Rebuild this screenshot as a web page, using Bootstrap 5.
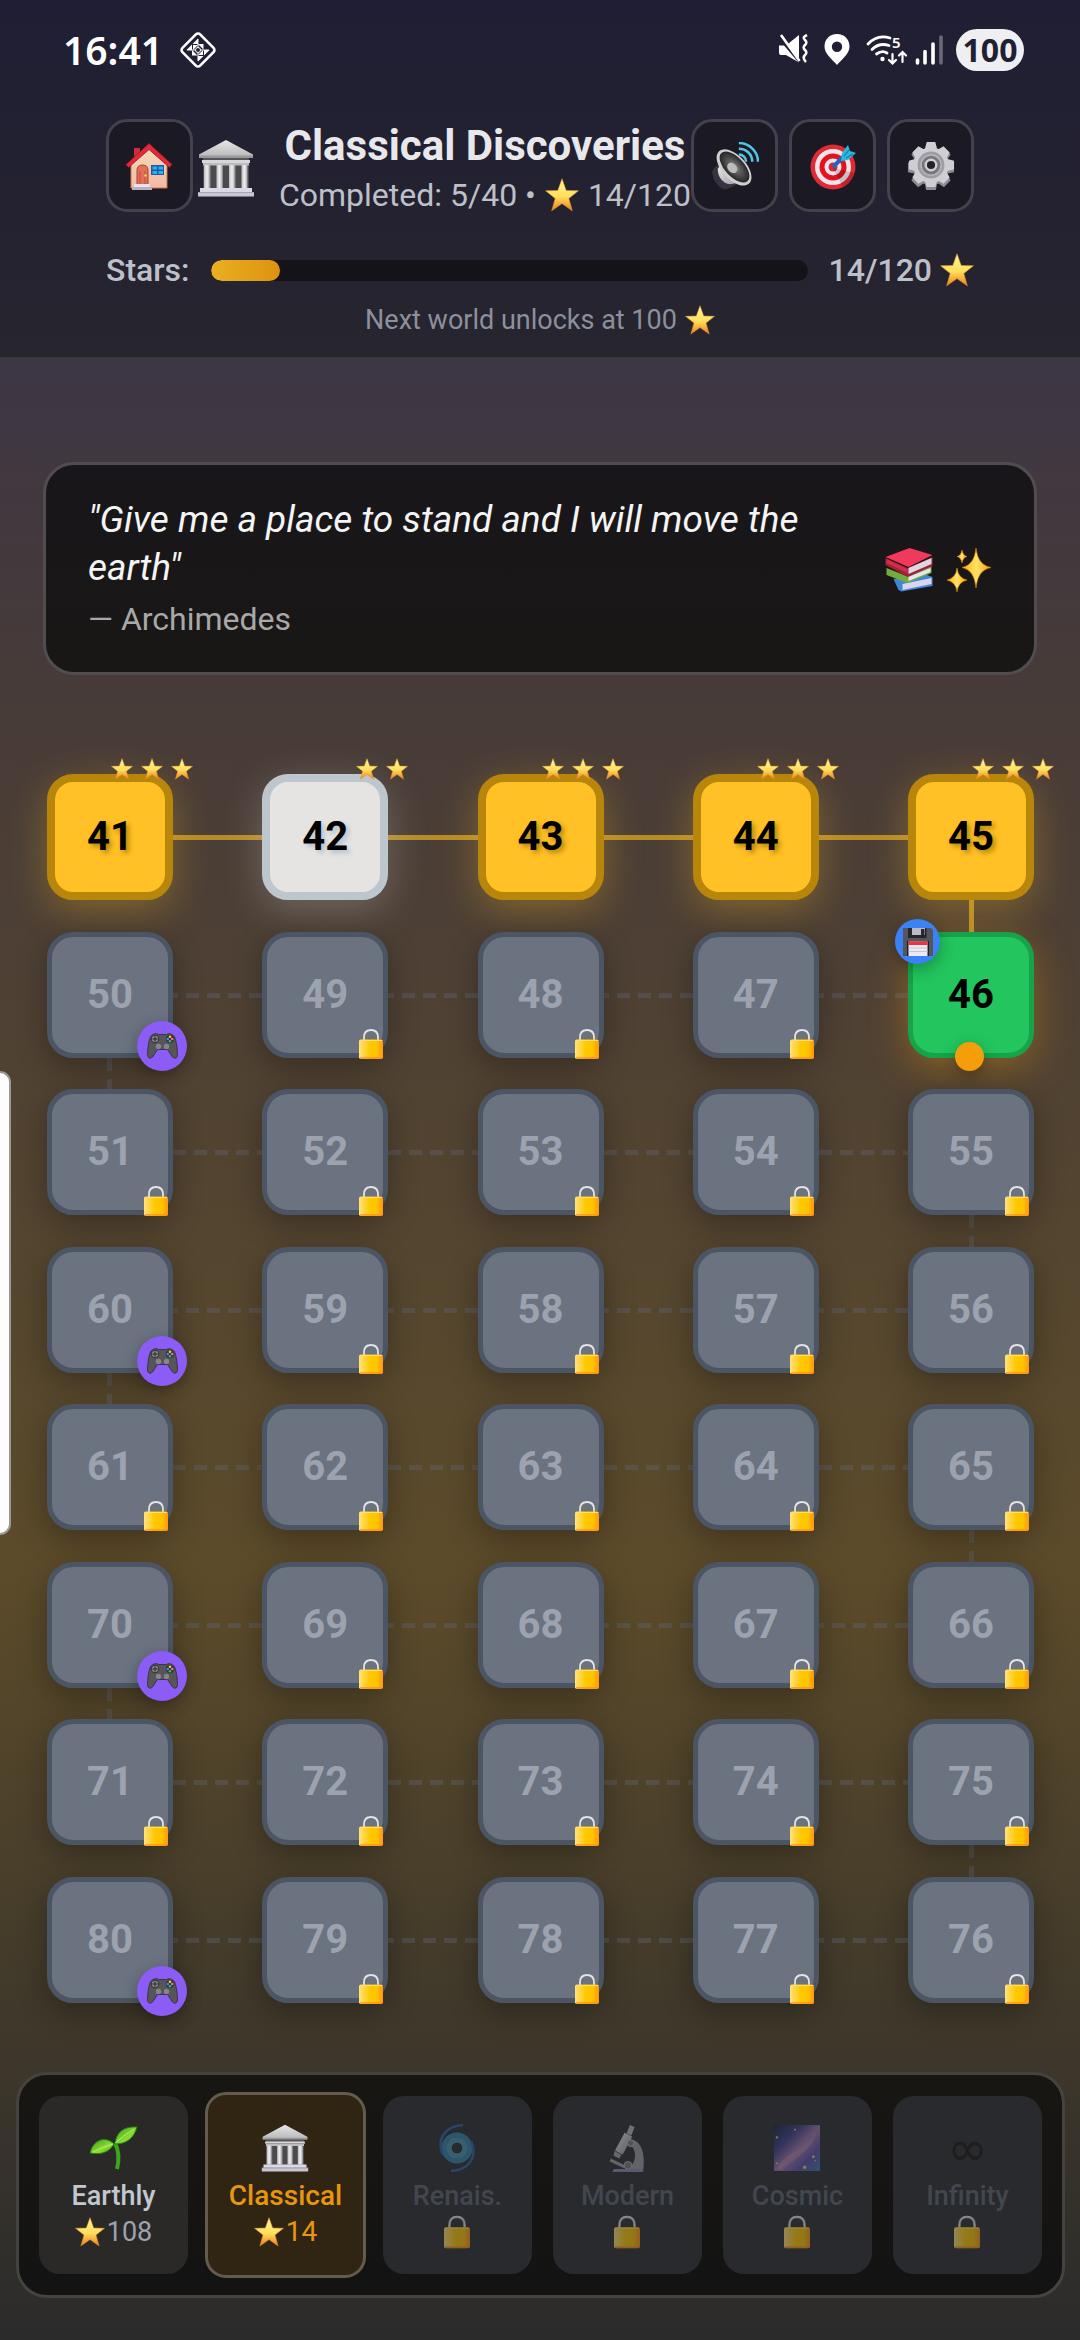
<!DOCTYPE html>
<html lang="en">
<head>
<meta charset="utf-8">
<meta name="viewport" content="width=device-width, initial-scale=1">
<title>Classical Discoveries</title>
<link rel="stylesheet" href="https://cdn.jsdelivr.net/npm/bootstrap@5.3.0/dist/css/bootstrap.min.css">
<style>
  body {
    font-family: Roboto, "Liberation Sans", sans-serif;
    background: linear-gradient(180deg, #39344a 0, #3d3644 360px, #473b39 680px, #5c4b2a 1570px, #2b2b2b 2340px) #2b2b2b;
    min-height: 100vh;
    color: #e8e8ea;
    overflow-x: hidden;
  }
  svg { display: block; flex: none; }
  .w-22 { width: 22px; height: 22px; }
  .w-30 { width: 30px; height: 30px; }
  .w-34 { width: 34px; height: 34px; }
  .w-48 { width: 48px; height: 48px; }
  .w-58 { width: 58px; height: 58px; }

  .top-area { background: linear-gradient(180deg, #1f1e34, #27252e); border-bottom: 3px solid #3b3841; padding-bottom: 19px; }
  .status-bar { font-family: "Noto Sans", sans-serif; font-weight: 600; color: #fff; height: 99px; padding: 0 56px 0 63px; }
  .status-bar svg { overflow: visible; }
  .clock { font-size: 39px; line-height: 40px; font-weight: 600; }
  .battery { background: #efeff2; color: #211f33; font-size: 32px; line-height: 42px; font-weight: 700; width: 68px; border-radius: 21px; text-align: center; margin-left: 12px; }

  .inner { padding: 0 106px; }
  .title-row { margin-top: 20px; }
  .tools { gap: 11px; }
  .tool { width: 87px; height: 93px; padding: 0; border: 3px solid #43424c; border-radius: 21px; background: #1b1923; display: flex; align-items: center; justify-content: center; }
  .world-name { font-size: 42px; line-height: 54px; font-weight: 700; margin: 0; white-space: nowrap; }
  .world-sub { font-size: 32px; line-height: 44px; color: #bdc0c8; white-space: nowrap; gap: 9px; }
  .star-row { font-size: 32px; line-height: 42px; font-weight: 500; color: #bdc0c8; margin-top: 32px; }
  .star-bar { height: 21px; border-radius: 11px; background: #141319; margin: 0 21px; }
  .star-bar .progress-bar { border-radius: 11px; background: linear-gradient(90deg, #e9b022, #de920f); }
  .unlock { font-size: 27px; line-height: 36px; color: #8c909b; margin-top: 11px; }

  .quote-box { margin: 102px 43px 0; padding: 31px 42px 29px; border: 3px solid #514d4f; border-radius: 31px; background: linear-gradient(#18161a, #191715); }
  .quote-box blockquote { font-size: 37px; line-height: 48px; font-style: italic; color: #f4f4f4; margin: 0 0 3px; }
  .quote-box figcaption { font-size: 32px; line-height: 48px; color: #a9a8a8; }
  .quote-art { gap: 12px; }

  .level-map { padding: 99px 46px 0 47px; }
  .tile { position: relative; width: 126px; height: 126px; flex: none; padding: 0; border-radius: 26px; font-size: 40px; font-weight: 700; line-height: 48px; color: #000; display: flex; align-items: center; justify-content: center; }
  .tile-gold { background: #ffc125; border: 8px solid #b8860b; box-shadow: 0 10px 39px rgba(255,193,37,.3); text-shadow: 3px 3px 5px #b8860b; }
  .tile-silver { background: #e5e4e2; border: 8px solid #bec6cd; box-shadow: 0 10px 39px rgba(229,228,226,.25); text-shadow: 3px 3px 5px #b6c0cb; }
  .tile-open { background: #22c55e; border: 5px solid #16a34a; box-shadow: 0 10px 39px rgba(245,158,11,.35); }
  .tile-shut, .tile-shut:disabled { background: #6b7280; border: 5px solid #4b5563; color: #9ca3af; box-shadow: 0 10px 31px rgba(0,0,0,.3); }
  .link-x { height: 5px; flex: 1 1 0; }
  .link-y { width: 5px; margin: 0 60px; }
  .turn-in { height: 32px; }
  .turn-after { height: 31px; }
  .done { background: #b58c29; }
  .dash-r { background: repeating-linear-gradient(90deg, #62677859 0 13px, transparent 13px 21px); }
  .dash-l { background: repeating-linear-gradient(270deg, #62677859 0 13px, transparent 13px 21px); }
  .dash-d { background: repeating-linear-gradient(180deg, #62677859 0 13px, transparent 13px 21px); }

  /* markers lying over a tile */
  .mark-stars { position: absolute; top: -24px; right: -28px; display: flex; gap: 8px; }
  .mark-lock { position: absolute; right: 0; bottom: -6px; width: 24px; height: 30px; }
  .mark-badge { position: absolute; border-radius: 50%; display: flex; align-items: center; justify-content: center; box-shadow: 0 5px 16px rgba(0,0,0,.3); }
  .mark-game { right: -19px; bottom: -18px; width: 50px; height: 50px; background: #8b5cf6; }
  .mark-save { left: -18px; top: -18px; width: 45px; height: 45px; background: #3b82f6; }
  .mark-dot { left: 42px; bottom: -18px; width: 29px; height: 29px; background: #f59e0b; }

  .world-nav { gap: 21px; margin: 69px 15px 42px 16px; padding: 21px 20px; border: 3px solid #454340; border-radius: 31px; background: linear-gradient(#181613, #131313); }
  .world { flex: 1 1 0; height: 178px; padding: 4px 0 0; border: 0; border-radius: 21px; background: #2a2928; color: #c3c8d0; font-size: 27px; line-height: 36px; display: flex; flex-direction: column; align-items: center; justify-content: center; }
  .world b { font-weight: 500; margin-top: 6px; }
  .world-score { color: #9ca3af; gap: 2px; }
  .world-now { flex-grow: 1.04; height: 186px; margin: -4px; border: 3px solid #655b4d; background: #302413; color: #e8960f; font-size: 28px; }
  .world-now .world-score { color: #e8960f; }
  .world-off, .world-off:disabled { background: #292a2d; color: #42474f; }
  .world-off svg { opacity: .5; }
  .inf { font-size: 48px; line-height: 48px; color: #1d1d1e; font-family: "DejaVu Sans", sans-serif; }
  .edge-panel { position: absolute; left: -3px; top: 1071px; width: 14px; height: 464px; background: #fdfdfd; border: 2px solid #9b9892; border-radius: 0 11px 11px 0; }
</style>
<script src="https://cdn.jsdelivr.net/npm/bootstrap@5.3.0/dist/js/bootstrap.bundle.min.js"></script>
</head>
<body class="position-relative">

<svg width="0" height="0" class="position-absolute" aria-hidden="true">
  <defs>
    <linearGradient id="gStar" x1="0" y1="0" x2="0" y2="1"><stop offset="0" stop-color="#fff6a0"/><stop offset=".55" stop-color="#ffdf5c"/><stop offset="1" stop-color="#f07d1c"/></linearGradient>
    <linearGradient id="gLock"><stop offset="0" stop-color="#ffe27e"/><stop offset=".45" stop-color="#ffc800"/><stop offset=".75" stop-color="#ffc400"/><stop offset="1" stop-color="#ff9410"/></linearGradient>
    <linearGradient id="gStone" x1="0" y1="0" x2="0" y2="1"><stop offset="0" stop-color="#e6e6e6"/><stop offset="1" stop-color="#b9b9bb"/></linearGradient>
    <linearGradient id="gCol"><stop offset="0" stop-color="#bdbcc2"/><stop offset=".5" stop-color="#efedf2"/><stop offset="1" stop-color="#aaa9ae"/></linearGradient>
    <linearGradient id="gWall" x1="0" y1="0" x2="0" y2="1"><stop offset="0" stop-color="#f3dcb8"/><stop offset="1" stop-color="#f3b9a6"/></linearGradient>
    <linearGradient id="gLeaf" x1="0" y1="0" x2="1" y2="1"><stop offset="0" stop-color="#2a9b16"/><stop offset=".6" stop-color="#8fdc33"/><stop offset="1" stop-color="#2f9a17"/></linearGradient>
    <linearGradient id="gSky" x1="0" y1="0" x2="1" y2="1"><stop offset="0" stop-color="#11243a"/><stop offset=".3" stop-color="#3c3d8c"/><stop offset=".52" stop-color="#a276ac"/><stop offset=".75" stop-color="#5a4fae"/><stop offset="1" stop-color="#3a79a8"/></linearGradient>
    <linearGradient id="gSteel" x1="0" y1="0" x2="1" y2="1"><stop offset="0" stop-color="#f4f4f4"/><stop offset="1" stop-color="#8f8e98"/></linearGradient>
    <linearGradient id="gTwinkle" x1="0" y1="0" x2="1" y2="0"><stop offset="0" stop-color="#ffb000"/><stop offset=".5" stop-color="#ffe368"/><stop offset="1" stop-color="#ff9d00"/></linearGradient>
    <radialGradient id="gCone"><stop offset="0" stop-color="#b5b5b5"/><stop offset=".35" stop-color="#626262"/><stop offset="1" stop-color="#252525"/></radialGradient>

    <symbol id="star" viewBox="0 0 34 34"><path d="M17 .8 21.2 12.5 33.4 12.8 23.8 20.4 27.3 32.8 17 25.6 6.7 32.8 10.2 20.4.6 12.8 12.8 12.5Z" fill="url(#gStar)" stroke="#e99527" stroke-width=".6"/></symbol>
    <symbol id="lock" viewBox="0 0 24 30"><path d="M5 12V8.500C5 3.500 8 1.200 12 1.200s7 2.300 7 7.300V12" fill="none" stroke="#6b6f78" stroke-width="2.600"/><path d="M5 11V8.500C5 3.500 8 1 12 1s7 2.500 7 7.500V11" fill="none" stroke="#e4e4e6" stroke-width="1.800"/><rect y="10.500" width="24" height="19.500" rx="1.800" fill="url(#gLock)"/><path d="M1 11.500h22" stroke="#ffdf6b"/><path d="M1 29h22" stroke="#ff8d20" stroke-width="1.400"/></symbol>
    <symbol id="temple" viewBox="0 0 58 58"><path d="M29 1 56 15.500V18H2v-2.500Z" fill="url(#gStone)"/><path d="M2 16.500h54V19H2z" fill="#99999b"/><path d="M6 19h46v3H6z" fill="#55555a"/><path d="M5 21h48v3H5z" fill="#d8d8dc"/><path d="M6 24h46v26H6z" fill="#4b4b4b"/><path d="M6 24h46v2.500H6z" fill="#bcbcc0"/><g fill="url(#gCol)"><rect x="7" y="26" width="6" height="23"/><rect x="19.500" y="26" width="6" height="23"/><rect x="32" y="26" width="6" height="23"/><rect x="44.500" y="26" width="6" height="23"/></g><path d="M13 27v22M25.500 27v22M38 27v22" stroke="#8d8d91"/><path d="M3 49h52v4H3z" fill="#dcd8e6"/><path d="M1 53h56v4.500H1z" fill="#cbc6d6"/><path d="M1 53.500h56" stroke="#aaa5b6"/></symbol>
    <symbol id="house" viewBox="0 0 48 48"><path d="M9 6h6v10H9z" fill="#c9303c"/><path d="M6 21 24 5l18 17v24H6Z" fill="url(#gWall)" stroke="#c07a4d"/><path d="M24 1.500 47 22.500l-2.500 3L24 7.500 3.500 25.500 1 22.500Z" fill="#e2293a" stroke="#8f1522" stroke-width=".8"/><path d="M12 44V28c0-3 2-5 5.500-5s5.500 2 5.500 5v16z" fill="#e0705a" stroke="#a8442f"/><path d="M15 43V29M20 43V29" stroke="#b9503c"/><circle cx="20.500" cy="33.500" r="1.300" fill="#ffd23c"/><path d="M26 23h13v10H26z" fill="#2457a6"/><path d="M27.500 24.500h4.500v3h-4.500zm6 0H38v3h-4.500zm-6 4.500h4.500v3h-4.500zm6 0H38v3h-4.500z" fill="#1fb7ee"/><path d="M9 42h16v3H9z" fill="#e8e4ea"/><path d="M7 45h20v3H7z" fill="#b7b1bd"/></symbol>
    <symbol id="speaker" viewBox="0 0 50 50"><path d="M1 31q3-7 9-8l19 19q-3 4-14 7.500Q3 46 1 31Z" fill="#38313f"/><path d="m7 28 6-10 24 23-17 3C12 43 7 36 7 28Z" fill="url(#gSteel)"/><ellipse cx="24" cy="26.500" rx="12.500" ry="23" transform="rotate(-43 24 26.500)" fill="#cfcfcf"/><ellipse cx="24.500" cy="26" rx="10" ry="20" transform="rotate(-43 24.500 26)" fill="url(#gCone)"/><ellipse cx="22" cy="27" rx="4.500" ry="6" transform="rotate(-43 22 27)" fill="#bcbcbc"/><g fill="none" stroke="#52c4e0" stroke-width="2.600"><path d="M29 13c4 0 7.500 3 7.500 7.500"/><path d="M29 7c8 0 14 6 14 13.500"/><path d="M29 1c11 0 20 9 20 19.500"/></g></symbol>
    <symbol id="target" viewBox="0 0 48 48"><circle cx="24" cy="25" r="22.500" fill="#e02a35"/><circle cx="24" cy="25" r="18" fill="#f0e4ea"/><circle cx="24" cy="25" r="13.500" fill="#e0131f"/><circle cx="24" cy="25" r="8.500" fill="#f0e4ea"/><circle cx="24" cy="25" r="4.500" fill="#d92633"/><path d="M24 26 46 31A22 22 0 0 1 34 45Z" fill="#000" opacity=".16"/><path d="m24 25 14-14" stroke="#1f63c4" stroke-width="4"/><path d="m33 11 6-8 2 6 6 2-8 7-7 1Z" fill="#2bb8dc"/><path d="m35 14 5-6M37 16l7-4" stroke="#0d86b5" stroke-width="1.200"/></symbol>
    <symbol id="gear" viewBox="0 0 48 50"><g fill="#8c8b96" transform="translate(0 2.500)"><circle cx="24" cy="24" r="18.500"/><path d="M19 0h10l1.500 8h-13zM19 48h10l1.500-8h-13z"/><path d="M19 0h10l1.500 8h-13zM19 48h10l1.500-8h-13z" transform="rotate(45 24 24)"/><path d="M19 0h10l1.500 8h-13zM19 48h10l1.500-8h-13z" transform="rotate(90 24 24)"/><path d="M19 0h10l1.500 8h-13zM19 48h10l1.500-8h-13z" transform="rotate(135 24 24)"/></g><g fill="#cfcfd3"><circle cx="24" cy="24" r="18.500"/><path d="M19.500 0h9l2 8h-13zM19.500 47h9l2-7h-13z"/><path d="M19.500 1h9l2 7h-13zM19.500 47h9l2-7h-13z" transform="rotate(45 24 24)"/><path d="M19.500 0h9l2 8h-13zM19.500 47h9l2-7h-13z" transform="rotate(90 24 24)"/><path d="M19.500 1h9l2 7h-13zM19.500 47h9l2-7h-13z" transform="rotate(135 24 24)"/></g><circle cx="24" cy="24" r="14" fill="#9d9da3"/><circle cx="24" cy="24" r="10.500" fill="#77777e" stroke="#b7b7bd" stroke-width="1.500"/><circle cx="24" cy="24" r="5.500" fill="#24232d" stroke="#cfcfd3" stroke-width="2.500"/></symbol>
    <symbol id="books" viewBox="0 0 49 44"><path d="m9 31 28-6 11 4v9L17 43.500 14 42Z" fill="#3f86d6"/><path d="m18 36 29-6v6L18 42Z" fill="#d9d5ec"/><path d="m2 20 20 8 25-10v7L23 35 2 27Z" fill="#6fae3a"/><path d="m24 29 22-9v4L24 33Z" fill="#e9e4f2"/><path d="m1 10 22 10L48 9v9L23 29 1 17Z" fill="#a51d3d"/><path d="m24 20 23-10v6L24 26Z" fill="#ddd7df"/><path d="M1 9 25 0l23 7-24 12Z" fill="#f1395c"/><path d="M2 11v4l21 10v-4Z" fill="#d22d4b"/></symbol>
    <symbol id="sparkles" viewBox="0 0 46 46"><g fill="url(#gTwinkle)" stroke="#f08a00" stroke-width=".5"><path d="M30 1q1.500 17 15 19.500Q31.500 23 30 41q-1.500-18-14-20.500Q28.500 18 30 1Z"/><path d="M11 21q1 10 10 12-9 2-10 12-1-10-10-12 9-2 10-12Z"/><path d="M16 3q.8 5.500 5 6.500-4.200 1-5 6.500-.8-5.500-5-6.500 4.200-1 5-6.500Z"/></g></symbol>
    <symbol id="pad" viewBox="0 0 31 26"><path d="M3.500 3.500C6 .5 10 0 11.500 1.500h8C21 0 25 .5 27.500 3.500c2 5 3 13 3 18 0 4-3 4.500-5 2.500l-5-7.500h-10l-5 7.500c-2 2-5 1.500-5-2.500 0-5 1-13 3-18Z" fill="#55555a" stroke="#2d2c31" stroke-width=".8"/><circle cx="8" cy="6" r="3.800" fill="#8c8c90" stroke="#303034"/><path d="M8 3.500v5M5.500 6h5" stroke="#3b3b40" stroke-width="1.400"/><circle cx="23" cy="6" r="4.200" fill="#333338"/><circle cx="23" cy="3.800" r="1.300" fill="#ffd21c"/><circle cx="25.200" cy="6" r="1.300" fill="#ff6d84"/><circle cx="20.800" cy="6" r="1.300" fill="#2c9cf0"/><circle cx="23" cy="8.200" r="1.300" fill="#1fc47c"/><circle cx="11.500" cy="13.500" r="2.700" fill="#85858a"/><circle cx="19.500" cy="13.500" r="2.700" fill="#85858a"/></symbol>
    <symbol id="disk" viewBox="0 0 30 28"><path d="M0 0h28l2 2v26H0Z" fill="#53565e"/><path d="M5 0h18.500v10H5Z" fill="#24262b"/><path d="M9 0h13v7H9Z" fill="#b9bbbf"/><path d="M18 1h3.500v6H18Z" fill="#2a2a2e"/><path d="M4 13h22v15H4Z" fill="#1e1f24"/><path d="M5.500 13.500h19V28h-19Z" fill="#eceaf0"/><path d="M5.500 13.500h19v3.500h-19Z" fill="#ee3340"/><path d="M5.500 20h19M5.500 23.500h19" stroke="#c6c4d2"/></symbol>
    <symbol id="sprout" viewBox="0 0 48 48"><path d="M25 19c4 8 4 18 2 26" fill="none" stroke="#3aa51d" stroke-width="4"/><path d="M25 20C26 8 34 2 47 3c-3 11-10 17-22 17Z" fill="url(#gLeaf)" stroke="#1d7f10"/><path d="M24 20C15 11 3 16 0 29c10 2 19 0 24-9Z" fill="url(#gLeaf)" stroke="#1d7f10"/><path d="M25 19Q33 12 44 5M23 20Q12 23 3 28" fill="none" stroke="#c9f27e" stroke-width=".8"/></symbol>
    <symbol id="swirl" viewBox="0 0 48 48"><circle cx="24" cy="24" r="10.500" fill="none" stroke="#3280ae" stroke-width="10"/><circle cx="24" cy="24" r="8" fill="none" stroke="#4a93b0" stroke-width="5"/><path d="M10 31C3 15 12 2 30 1" fill="none" stroke="#2a63a8" stroke-width="2.500"/><path d="M38 17C45 33 36 46 18 47" fill="none" stroke="#2a63a8" stroke-width="2.500"/></symbol>
    <symbol id="scope" viewBox="0 0 48 50"><path d="m27 1 5 2-3.500 9-5-2z" fill="#b4b4ba"/><path d="m21.500 9 8 4-10 19-8-4.500z" fill="url(#gSteel)"/><path d="m11 28 7 4-2 4-6-3z" fill="#a4a4aa"/><path d="M27 16c12 1 16 14 14 31H26c8-9 8-17 3-24Z" fill="#9c9ca3"/><circle cx="28" cy="20" r="3.500" fill="#7c7c84" stroke="#c5c5cb"/><path d="m7 36 15 7-1 3L6 39z" fill="#a0a0a6"/><circle cx="25" cy="43" r="4" fill="#77777f" stroke="#bbb"/><path d="M10 47h31v3H9z" fill="#8c8ab0"/></symbol>
    <symbol id="galaxy" viewBox="0 0 48 50"><path d="M0 1h48v48H0z" fill="url(#gSky)"/><path d="M3 46C12 30 28 30 44 10 38 30 20 36 8 49Z" fill="#c692b0" opacity=".5"/><g fill="#f2d34a"><circle cx="3" cy="14" r="1.200"/><circle cx="22" cy="6" r="1"/><circle cx="41" cy="34" r="1.400"/><circle cx="32" cy="45" r="1.800"/><circle cx="3" cy="41" r="1"/><circle cx="43" cy="38" r=".8"/></g></symbol>
  </defs>
</svg>

<header class="top-area">
  <div class="status-bar d-flex align-items-center justify-content-between">
    <div class="d-flex align-items-center gap-3">
      <span class="clock">16:41</span>
      <svg width="38" height="38" viewBox="0 0 38 38"><rect x="6.500" y="6.500" width="25" height="25" rx="3" transform="rotate(45 19 19)" fill="none" stroke="#fff" stroke-width="2.600"/><path d="M19 7.500V13h-5.500zM19 13h5.500v5.500zM7.500 19 13 13.500V19zM13 19v5.500h5.500zM19 30.500V25h5.500zM30.500 19 25 24.500V19zM14 14h5l-5 5zM24 19v5h-5z" fill="#fff"/><path d="M8 19h22M19 8v22" stroke="#fff" stroke-width="1"/><circle cx="19" cy="19" r="2.500" fill="#211f33" stroke="#fff"/></svg>
    </div>
    <div class="d-flex align-items-center">
      <svg width="30" height="31" viewBox="0 0 30 31"><path d="M1 11.500h7L21 1v27.500L8 21H3q-2 0-2-2Z" fill="#fff"/><path d="M0 2 22 28" stroke="#211f33" stroke-width="3"/><path d="M3 1 21.500 27" stroke="#fff" stroke-width="2.600"/><path d="M29 1c-4 2-4 3-2 5s2 3 0 5-2 3 0 5 2 3 0 5-2 4 1 7" fill="none" stroke="#fff" stroke-width="2.600"/></svg>
      <svg class="ms-3" width="26" height="31" viewBox="0 0 26 31"><path fill-rule="evenodd" d="M13 0C5.500 0 .5 5.500.5 12.500.5 20 8 25 13 31c5-6 12.500-11 12.500-18.500C25.500 5.500 20.500 0 13 0Zm0 7.500a5.200 5.200 0 1 1 0 10.400 5.200 5.200 0 0 1 0-10.400Z" fill="#fff"/></svg>
      <svg class="ms-3" width="40" height="31" viewBox="0 0 40 31"><g fill="none" stroke="#fff" stroke-width="2.800" stroke-linecap="round"><path d="M2 10C8 3.500 16 1.500 24 4"/><path d="M6 15.500C11 10.500 17 9.500 23 11.500"/><path d="M10.500 20C14 17.500 18 17 21 19"/><path d="M26.500 20v9M23 26l3.500 3.500L30 26M36.500 28v-9.500M33 21.500l3.500-3.500L40 21.500" stroke-width="2.200"/></g><circle cx="16.500" cy="25" r="2.200" fill="#fff"/><text x="26" y="14" font-size="15" fill="#fff" font-family="Noto Sans">5</text></svg>
      <svg class="ms-2" width="30" height="31" viewBox="0 0 30 31"><path d="M3.500 26v3M11 17.500V29M19 10v19" stroke="#fff" stroke-width="3.600" stroke-linecap="round"/><path d="M27 3v26" stroke="#6b6979" stroke-width="3.600" stroke-linecap="round"/></svg>
      <span class="battery">100</span>
    </div>
  </div>

  <div class="inner">
    <div class="title-row d-flex align-items-start">
      <button class="tool" type="button" aria-label="Home"><svg class="w-48"><use href="#house"/></svg></button>
      <svg class="w-58 ms-1 align-self-center"><use href="#temple"/></svg>
      <div class="flex-grow-1 d-flex flex-column align-items-center ms-4">
        <h1 class="world-name">Classical Discoveries</h1>
        <div class="world-sub d-flex align-items-center"><span>Completed: 5/40 •</span><svg class="w-34"><use href="#star"/></svg><span>14/120</span></div>
      </div>
      <div class="tools d-flex">
        <button class="tool" type="button" aria-label="Sound"><svg class="w-48"><use href="#speaker"/></svg></button>
        <button class="tool" type="button" aria-label="Goals"><svg class="w-48"><use href="#target"/></svg></button>
        <button class="tool" type="button" aria-label="Settings"><svg class="w-48"><use href="#gear"/></svg></button>
      </div>
    </div>
    <div class="star-row d-flex align-items-center">
      <span>Stars:</span>
      <div class="progress star-bar flex-grow-1" role="progressbar" aria-label="Stars" aria-valuenow="14" aria-valuemin="0" aria-valuemax="120"><div class="progress-bar" style="width:11.67%"></div></div>
      <span>14/120</span><svg class="w-34 ms-2"><use href="#star"/></svg>
    </div>
    <div class="unlock d-flex align-items-center justify-content-center gap-2"><span>Next world unlocks at 100</span><svg class="w-30"><use href="#star"/></svg></div>
  </div>
</header>

<main>
  <figure class="quote-box d-flex align-items-center">
    <div class="flex-grow-1">
      <blockquote>"Give me a place to stand and I will move the earth"</blockquote>
      <figcaption>— Archimedes</figcaption>
    </div>
    <div class="quote-art d-flex ms-5 ps-3 align-items-center">
      <svg width="50" height="44"><use href="#books"/></svg>
      <svg width="46" height="46"><use href="#sparkles"/></svg>
    </div>
  </figure>

  <section class="level-map" id="map" aria-label="Levels"></section>
</main>

<nav class="world-nav d-flex align-items-center" aria-label="Worlds">
  <button class="world" type="button"><svg class="w-48"><use href="#sprout"/></svg><b>Earthly</b><span class="world-score d-flex align-items-center"><svg class="w-30"><use href="#star"/></svg>108</span></button>
  <button class="world world-now" type="button" aria-current="true"><svg class="w-48"><use href="#temple"/></svg><b>Classical</b><span class="world-score d-flex align-items-center"><svg class="w-30"><use href="#star"/></svg>14</span></button>
  <button class="world world-off" type="button" disabled><svg class="w-48"><use href="#swirl"/></svg><b>Renais.</b><svg width="26" height="36"><use href="#lock"/></svg></button>
  <button class="world world-off" type="button" disabled><svg class="w-48"><use href="#scope"/></svg><b>Modern</b><svg width="26" height="36"><use href="#lock"/></svg></button>
  <button class="world world-off" type="button" disabled><svg class="w-48"><use href="#galaxy"/></svg><b>Cosmic</b><svg width="26" height="36"><use href="#lock"/></svg></button>
  <button class="world world-off" type="button" disabled><span class="inf">∞</span><b>Infinity</b><svg width="26" height="36"><use href="#lock"/></svg></button>
</nav>

<aside class="edge-panel" aria-hidden="true"></aside>

<script>
  // Levels run left to right, then right to left, so two rows make one switchback.
  const earned = { 41: 3, 42: 2, 43: 3, 44: 3, 45: 3 };
  const current = 46, first = 41, perRow = 5, rows = 8;
  const icon = (id, cls) => `<svg class="${cls}"><use href="#${id}"/></svg>`;

  function tile(n) {
    if (earned[n]) {
      const kind = earned[n] === 3 ? 'gold' : 'silver';
      return `<button type="button" class="tile tile-${kind}">${n}<span class="mark-stars">${icon('star', 'w-22').repeat(earned[n])}</span></button>`;
    }
    if (n === current)
      return `<button type="button" class="tile tile-open">${n}<span class="mark-badge mark-save"><svg width="30" height="28"><use href="#disk"/></svg></span><span class="mark-badge mark-dot"></span></button>`;
    const extra = n % 10 === 0
      ? '<span class="mark-badge mark-game"><svg width="31" height="26"><use href="#pad"/></svg></span>'
      : icon('lock', 'mark-lock');
    return `<button type="button" class="tile tile-shut" disabled>${n}${extra}</button>`;
  }

  function row(r) {
    const start = first + r * perRow;
    const nums = Array.from({ length: perRow }, (_, i) => start + i);
    const dir = r % 2 ? 'l' : 'r';
    if (r % 2) nums.reverse();
    const link = r === 0 ? 'done' : 'dash-' + dir;
    return `<div class="d-flex align-items-center">${nums.map(tile).join(`<div class="link-x ${link}"></div>`)}</div>`;
  }

  let html = '';
  for (let r = 0; r < rows; r += 2) {
    html += `${row(r)}
      <div class="turn-in d-flex justify-content-end"><div class="link-y ${r === 0 ? 'done' : 'dash-d'}"></div></div>
      ${row(r + 1)}`;
    if (r + 2 < rows) html += '<div class="turn-after d-flex"><div class="link-y dash-d"></div></div>';
  }
  document.getElementById('map').innerHTML = html;
</script>
</body>
</html>
